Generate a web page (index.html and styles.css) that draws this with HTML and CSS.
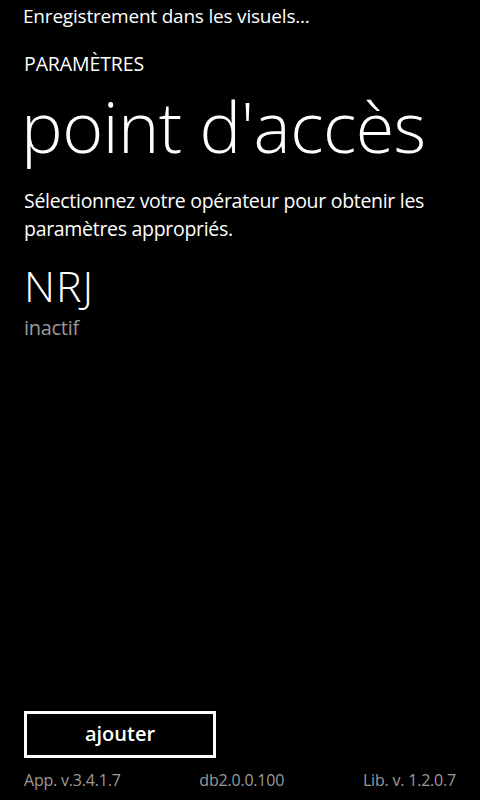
FILE: index.html
```html
<!DOCTYPE html>
<html lang="fr">
<head>
<meta charset="utf-8">
<title>point d'accès</title>
<link rel="stylesheet" href="styles.css">
</head>
<body>
<div class="screen">
  <div class="status">Enregistrement dans les visuels...</div>
  <div class="app-title">PARAMÈTRES</div>
  <h1 class="page-title">point d'accès</h1>
  <p class="desc">Sélectionnez votre opérateur pour obtenir les paramètres appropriés.</p>
  <div class="item">
    <div class="item-name">NRJ</div>
    <div class="item-sub">inactif</div>
  </div>
  <div class="spacer"></div>
  <div class="actions">
    <button class="btn">ajouter</button>
  </div>
  <div class="footer">
    <span class="f-left">App. v.3.4.1.7</span>
    <span class="f-mid">db2.0.0.100</span>
    <span class="f-right">Lib. v. 1.2.0.7</span>
  </div>
</div>
</body>
</html>
```
FILE: styles.css
```css
html, body {
  margin: 0;
  padding: 0;
  background: #000;
}
body {
  color: #fff;
  font-family: "Open Sans", "Noto Sans", "Liberation Sans", sans-serif;
}
.screen {
  width: 480px;
  height: 800px;
  box-sizing: border-box;
  padding: 0 24px 0 24px;
  display: flex;
  flex-direction: column;
}
.status {
  font-size: 19px;
  line-height: 24px;
  margin-top: 4px;
  margin-left: -1px;
  letter-spacing: -0.2px;
}
.app-title {
  font-size: 19.5px;
  line-height: 24px;
  margin-top: 24px;
  letter-spacing: -0.1px;
}
.page-title {
  font-size: 70px;
  font-weight: 300;
  line-height: 80px;
  margin: 10px 0 0 -3px;
  letter-spacing: -0.5px;
}
.desc {
  font-size: 19.5px;
  line-height: 28px;
  margin: 21px 0 0 0;
  letter-spacing: -0.3px;
}
.item {
  margin-top: 14px;
}
.item-name {
  font-size: 43px;
  font-weight: 300;
  line-height: 58px;
  letter-spacing: 1px;
}
.item-sub {
  font-size: 20px;
  line-height: 26px;
  color: #9a9a9a;
  letter-spacing: -0.3px;
}
.spacer {
  flex: 1;
}
.actions {
  display: flex;
}
.btn {
  width: 192px;
  height: 47px;
  background: transparent;
  border: 3px solid #fff;
  color: #fff;
  font-family: inherit;
  font-size: 20px;
  font-weight: 600;
  padding: 0 0 2px 0;
}
.footer {
  display: flex;
  justify-content: space-between;
  font-size: 16px;
  color: #9a9a9a;
  line-height: 22px;
  margin: 11px 0 9px 0;
  letter-spacing: -0.2px;
}
```
